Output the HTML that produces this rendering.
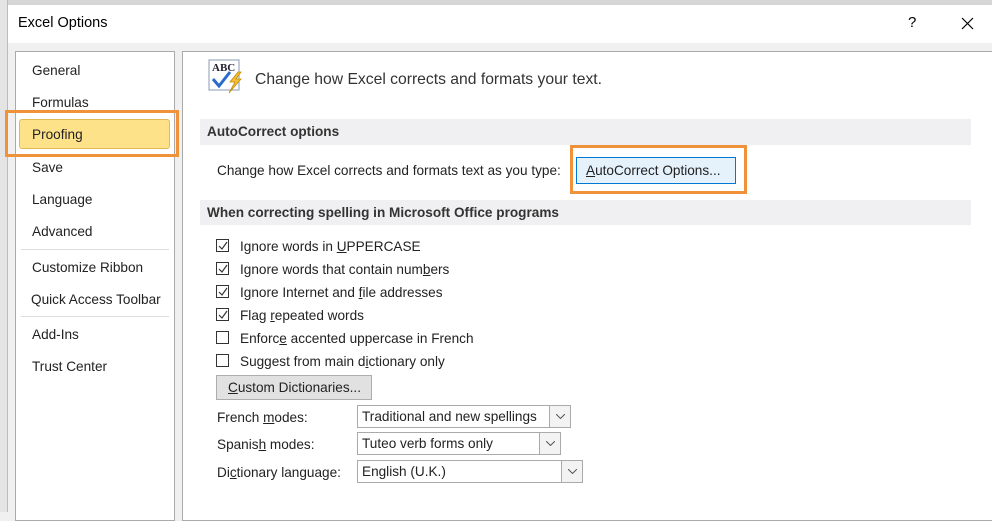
<!DOCTYPE html>
<html><head><style>
*{margin:0;padding:0;box-sizing:border-box}
body{width:992px;height:512px;overflow:hidden;background:#f0f0f0;font-family:"Liberation Sans",sans-serif;font-size:13.6px;color:#222;position:relative}
.a{position:absolute}
u{text-decoration:underline}
.cb{position:absolute;width:13px;height:13px;border:1px solid #333;background:#fff}
.lbl{position:absolute;left:240px}
.sel{position:absolute;height:23px;border:1px solid #aaa;background:#fff;padding:3px 4px;white-space:nowrap}
.dd{position:absolute;right:0;top:0;width:21px;height:21px;border-left:1px solid #aaa;background:#f3f3f3}
.dd svg{position:absolute;left:6px;top:8px}
.nav{position:absolute;left:32px}
</style></head><body>
<div class="a" style="left:0;top:0;width:992px;height:5px;background:#d6d6d6"></div>
<div class="a" style="left:0;top:0;width:8px;height:512px;background:#e4e4e4;border-right:1px solid #bbb"></div>
<div class="a" style="left:8px;top:5px;width:984px;height:38px;background:#fff"></div>
<div class="a" style="left:18px;top:15px;font-size:14.5px;color:#000">Excel Options</div>
<div class="a" style="left:908px;top:14px;font-size:15px;color:#000">?</div>
<svg class="a" style="left:961px;top:17px" width="13" height="13"><path d="M1 1L12 12M12 1L1 12" stroke="#000" stroke-width="1.2"/></svg>
<div class="a" style="left:15px;top:51px;width:160px;height:470px;background:#fff;border:1px solid #aaa"></div>
<div class="a" style="left:182px;top:51px;width:815px;height:470px;background:#fff;border:1px solid #aaa"></div>
<div class="nav" style="top:63px">General</div>
<div class="nav" style="top:95px">Formulas</div>
<div class="a" style="left:19px;top:119px;width:151px;height:30px;background:#fee28a;border:1px solid #e2b955;border-radius:3px"></div>
<div class="nav" style="top:127px">Proofing</div>
<div class="a" style="left:5px;top:110px;width:174px;height:47px;border:3px solid #f0923a"></div>
<div class="nav" style="top:160px">Save</div>
<div class="nav" style="top:192px">Language</div>
<div class="nav" style="top:224px">Advanced</div>
<div class="a" style="left:21px;top:249px;width:148px;height:1px;background:#ddd"></div>
<div class="nav" style="top:260px">Customize Ribbon</div>
<div class="nav" style="top:292px;left:31px">Quick Access Toolbar</div>
<div class="a" style="left:21px;top:316px;width:148px;height:1px;background:#ddd"></div>
<div class="nav" style="top:327px">Add-Ins</div>
<div class="nav" style="top:359px">Trust Center</div>
<svg class="a" style="left:208px;top:59px" width="38" height="36">
<rect x="1" y="1" width="30" height="30" fill="#fff" stroke="#8a9bb5"/>
<text x="4" y="12" font-family="Liberation Serif" font-size="11" font-weight="bold" fill="#223">ABC</text>
<path d="M5 20L11 27L22 13" stroke="#2a6bd0" stroke-width="3" fill="none"/>
<path d="M30 13L22 23L27 23L21 34L33 20L28 20L33 13Z" fill="#f5c030" stroke="#c08a10" stroke-width=".8"/>
</svg>
<div class="a" style="left:255px;top:71px;font-size:15.7px;color:#333">Change how Excel corrects and formats your text.</div>
<div class="a" style="left:200px;top:119px;width:771px;height:26px;background:#f0f0f2"></div>
<div class="a" style="left:207px;top:124px;font-weight:bold;color:#333">AutoCorrect options</div>
<div class="a" style="left:217px;top:163px">Change how Excel corrects and formats text as you type:</div>
<div class="a" style="left:570px;top:145px;width:177px;height:49px;border:3px solid #f0923a"></div>
<div class="a" style="left:576px;top:157px;width:160px;height:27px;background:#e5f1fb;border:1px solid #0078d7"></div>
<div class="a" style="left:586px;top:163px"><u>A</u>utoCorrect Options...</div>
<div class="a" style="left:200px;top:200px;width:771px;height:25px;background:#f0f0f2"></div>
<div class="a" style="left:207px;top:205px;font-weight:bold;color:#333">When correcting spelling in Microsoft Office programs</div>
<div class="cb" style="left:216px;top:239px"></div><div class="lbl" style="top:239px">Ignore words in <u>U</u>PPERCASE</div>
<div class="cb" style="left:216px;top:262px"></div><div class="lbl" style="top:262px">Ignore words that contain num<u>b</u>ers</div>
<div class="cb" style="left:216px;top:285px"></div><div class="lbl" style="top:285px">Ignore Internet and <u>f</u>ile addresses</div>
<div class="cb" style="left:216px;top:308px"></div><div class="lbl" style="top:308px">Flag <u>r</u>epeated words</div>
<div class="cb" style="left:216px;top:331px"></div><div class="lbl" style="top:331px">Enforc<u>e</u> accented uppercase in French</div>
<div class="cb" style="left:216px;top:354px"></div><div class="lbl" style="top:354px">Suggest from main d<u>i</u>ctionary only</div>
<svg class="a" style="left:216px;top:239px" width="14" height="90"><g stroke="#333" stroke-width="1.2" fill="none"><path d="M3 7L6 10L11 3"/><path d="M3 30L6 33L11 26"/><path d="M3 53L6 56L11 49"/><path d="M3 76L6 79L11 72"/></g></svg>
<div class="a" style="left:216px;top:375px;width:156px;height:25px;background:#e1e1e1;border:1px solid #adadad"></div>
<div class="a" style="left:228px;top:380px"><u>C</u>ustom Dictionaries...</div>
<div class="a" style="left:217px;top:410px">French <u>m</u>odes:</div>
<div class="sel" style="left:357px;top:405px;width:214px">Traditional and new spellings<div class="dd"><svg width="9" height="5"><path d="M0 0L4.5 4.5L9 0" stroke="#555" fill="none"/></svg></div></div>
<div class="a" style="left:217px;top:437px">Spanis<u>h</u> modes:</div>
<div class="sel" style="left:357px;top:432px;width:204px">Tuteo verb forms only<div class="dd"><svg width="9" height="5"><path d="M0 0L4.5 4.5L9 0" stroke="#555" fill="none"/></svg></div></div>
<div class="a" style="left:217px;top:465px">Di<u>c</u>tionary language:</div>
<div class="sel" style="left:357px;top:460px;width:226px">English (U.K.)<div class="dd"><svg width="9" height="5"><path d="M0 0L4.5 4.5L9 0" stroke="#555" fill="none"/></svg></div></div>
</body></html>
